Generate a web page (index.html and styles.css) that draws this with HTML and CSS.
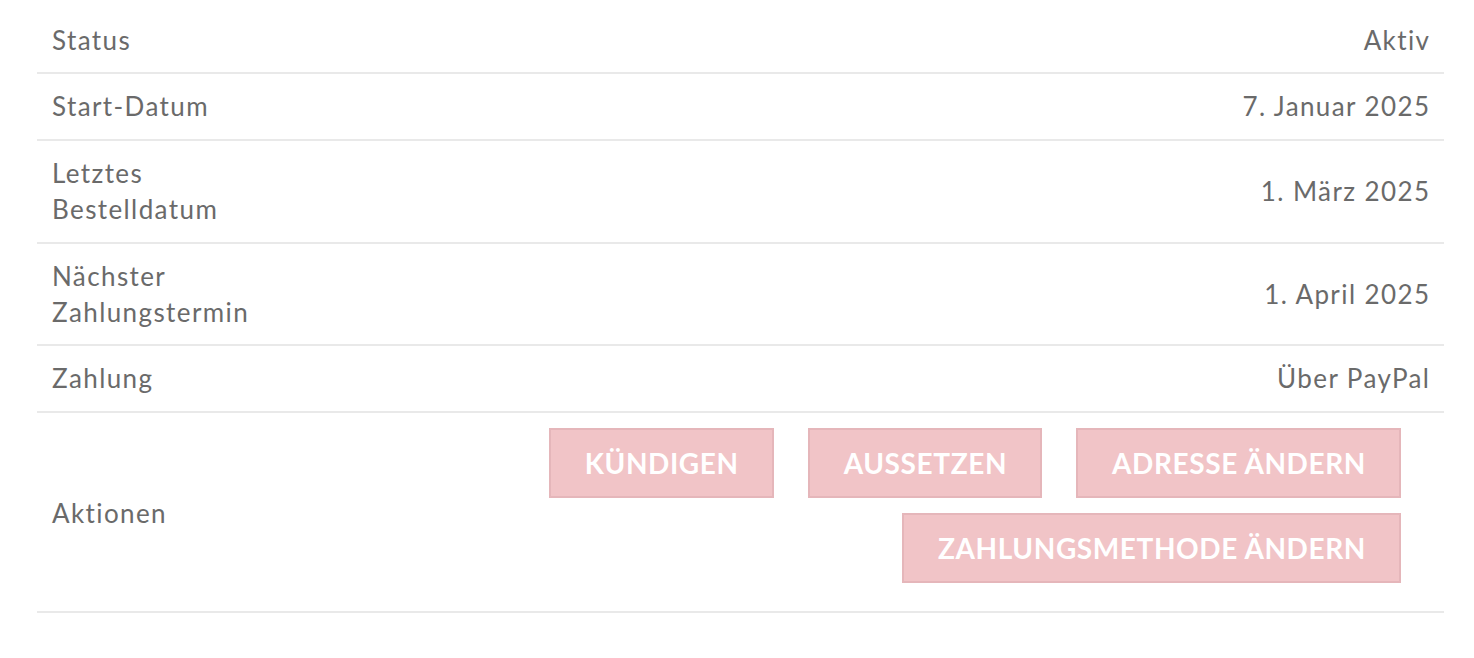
FILE: index.html
```html
<!DOCTYPE html>
<html lang="de">
<head>
    <meta charset="UTF-8">
    <meta name="viewport" content="width=device-width, initial-scale=1.0">
    <title>Abonnement Details</title>
    <link rel="stylesheet" href="styles.css">
</head>
<body>
    <div class="subscription-details">
        <div class="detail-row">
            <div class="detail-label">Status</div>
            <div class="detail-value">Aktiv</div>
        </div>
        <div class="detail-row">
            <div class="detail-label">Start-Datum</div>
            <div class="detail-value">7. Januar 2025</div>
        </div>
        <div class="detail-row">
            <div class="detail-label">Letztes Bestelldatum</div>
            <div class="detail-value">1. März 2025</div>
        </div>
        <div class="detail-row">
            <div class="detail-label">Nächster Zahlungstermin</div>
            <div class="detail-value">1. April 2025</div>
        </div>
        <div class="detail-row">
            <div class="detail-label">Zahlung</div>
            <div class="detail-value">Über PayPal</div>
        </div>
        <div class="detail-row actions-row">
            <div class="detail-label">Aktionen</div>
            <div class="detail-actions">
                <button class="action-button">Kündigen</button>
                <button class="action-button">Aussetzen</button>
                <button class="action-button">Adresse ändern</button>
                <button class="action-button">Zahlungsmethode ändern</button>
            </div>
        </div>
    </div>
</body>
</html>
```

FILE: styles.css
```css
:root {
    --text: #6a6a6a;
    --line: #e9e9e9;
    --button-bg: #f1c4c7;
    --button-border: #e5b6ba;
}

* {
    box-sizing: border-box;
    margin: 0;
    padding: 0;
    font-family: Lato, 'Open Sans', sans-serif;
}

body {
    background: #fff;
    color: var(--text);
    font-size: 26px;
    line-height: 36.4px;
    letter-spacing: 1.4px;
    padding: 8px 30px 0 37px;
}

.subscription-details {
    width: 1407px;
}

.detail-row {
    display: flex;
    justify-content: space-between;
    align-items: center;
    padding: 14px 15px;
    border-bottom: 2px solid var(--line);
}

.detail-label {
    width: 240px;
    flex-shrink: 0;
}

.detail-value {
    text-align: right;
    margin-right: -1.4px;
}

.actions-row {
    padding-top: 15px;
    padding-bottom: 13px;
}

.detail-actions {
    flex: 1;
    display: flex;
    flex-wrap: wrap;
    justify-content: flex-end;
    column-gap: 34px;
    padding-right: 28px;
}

.action-button {
    background-color: var(--button-bg);
    border: 2px solid var(--button-border);
    color: #fff;
    font-size: 28px;
    font-weight: 700;
    line-height: 38px;
    letter-spacing: 0.6px;
    text-transform: uppercase;
    padding: 14px 33px 14px 34px;
    margin-bottom: 15px;
    cursor: pointer;
}
```
